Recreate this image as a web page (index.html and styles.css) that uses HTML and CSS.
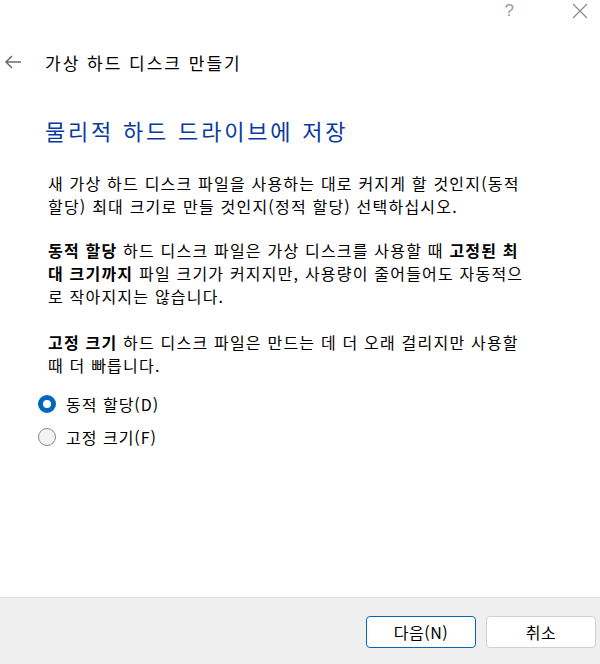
FILE: index.html
```html
<!DOCTYPE html>
<html lang="ko">
<head>
    <meta charset="UTF-8">
    <title>가상 하드 디스크 만들기</title>
    <link rel="stylesheet" href="styles.css">
</head>
<body>
    <div class="dialog">
        <!-- Title bar -->
        <div class="titlebar">
            <span class="help">?</span>
            <svg class="close" width="16" height="16" viewBox="0 0 16 16">
                <path d="M1 1 L15 15 M15 1 L1 15" stroke="#8a8a8a" stroke-width="1.2" fill="none"/>
            </svg>
        </div>

        <!-- Header -->
        <div class="header">
            <svg class="back" width="18" height="14" viewBox="0 0 18 14">
                <path d="M17 7 H2 M8 1 L2 7 L8 13" stroke="#6b6b6b" stroke-width="1.5" fill="none"/>
            </svg>
            <span class="title">가상 하드 디스크 만들기</span>
        </div>

        <!-- Content -->
        <div class="content">
            <h1>물리적 하드 드라이브에 저장</h1>
            <p>새 가상 하드 디스크 파일을 사용하는 대로 커지게 할 것인지(동적<br>할당) 최대 크기로 만들 것인지(정적 할당) 선택하십시오.</p>
            <p><b>동적 할당</b> 하드 디스크 파일은 가상 디스크를 사용할 때 <b>고정된 최<br>대 크기까지</b> 파일 크기가 커지지만, 사용량이 줄어들어도 자동적으<br>로 작아지지는 않습니다.</p>
            <p><b>고정 크기</b> 하드 디스크 파일은 만드는 데 더 오래 걸리지만 사용할<br>때 더 빠릅니다.</p>

            <div class="options">
                <label class="option"><span class="radio checked"></span>동적 할당(D)</label>
                <label class="option"><span class="radio"></span>고정 크기(F)</label>
            </div>
        </div>

        <!-- Footer -->
        <div class="footer">
            <button class="primary">다음(N)</button>
            <button>취소</button>
        </div>
    </div>
</body>
</html>
```

FILE: styles.css
```css
body {
    margin: 0;
    font-family: 'Noto Sans CJK KR', 'Noto Sans', sans-serif;
    color: #000;
    background: #fff;
}

.dialog {
    width: 600px;
    height: 664px;
    display: flex;
    flex-direction: column;
}

.titlebar {
    height: 40px;
    display: flex;
    justify-content: flex-end;
    align-items: center;
    gap: 58px;
    padding: 0 12px 18px 0;
    box-sizing: border-box;
}

.help {
    color: #9a9a9a;
    font-size: 17px;
    font-family: 'Liberation Sans', sans-serif;
}

.header {
    display: flex;
    align-items: center;
    height: 44px;
    padding-left: 4px;
}

.title {
    margin-left: 23px;
    font-size: 17px;
    letter-spacing: 2px;
}

.content {
    padding: 0 20px 0 48px;
}

h1 {
    margin: 31px 0 0 -3px;
    font-size: 22px;
    font-weight: normal;
    color: #0a3aa0;
    line-height: 30px;
    letter-spacing: 2.8px;
}

p {
    margin: 20px 0 0;
    font-size: 16px;
    line-height: 23px;
    letter-spacing: 1.2px;
}

p:first-of-type {
    margin-top: 27px;
}

p:nth-of-type(2) {
    margin-top: 21px;
}

p:last-of-type {
    margin-top: 23px;
}

b {
    font-weight: bold;
}

.options {
    margin: 16px 0 0 -10px;
    display: flex;
    flex-direction: column;
    gap: 11px;
}

.option {
    display: flex;
    align-items: center;
    gap: 10px;
    font-size: 16px;
    line-height: 22px;
    letter-spacing: 1px;
}

.radio {
    width: 18px;
    height: 18px;
    border-radius: 50%;
    box-sizing: border-box;
    border: 1px solid #8a8a8a;
    background: #f3f3f3;
}

.radio.checked {
    border: 5px solid #0067c0;
    background: #fff;
}

.footer {
    margin-top: auto;
    height: 67px;
    background: #efefef;
    border-top: 1px solid #e0e0e0;
    display: flex;
    justify-content: flex-end;
    align-items: flex-start;
    gap: 10px;
    padding: 18px 4px 0 0;
    box-sizing: border-box;
}

button {
    width: 110px;
    height: 32px;
    background: #fff;
    border: 1px solid #d0d0d0;
    border-radius: 4px;
    font-family: inherit;
    font-size: 16px;
    color: #000;
    letter-spacing: 0.5px;
}

button.primary {
    border-color: #0067c0;
}
```
